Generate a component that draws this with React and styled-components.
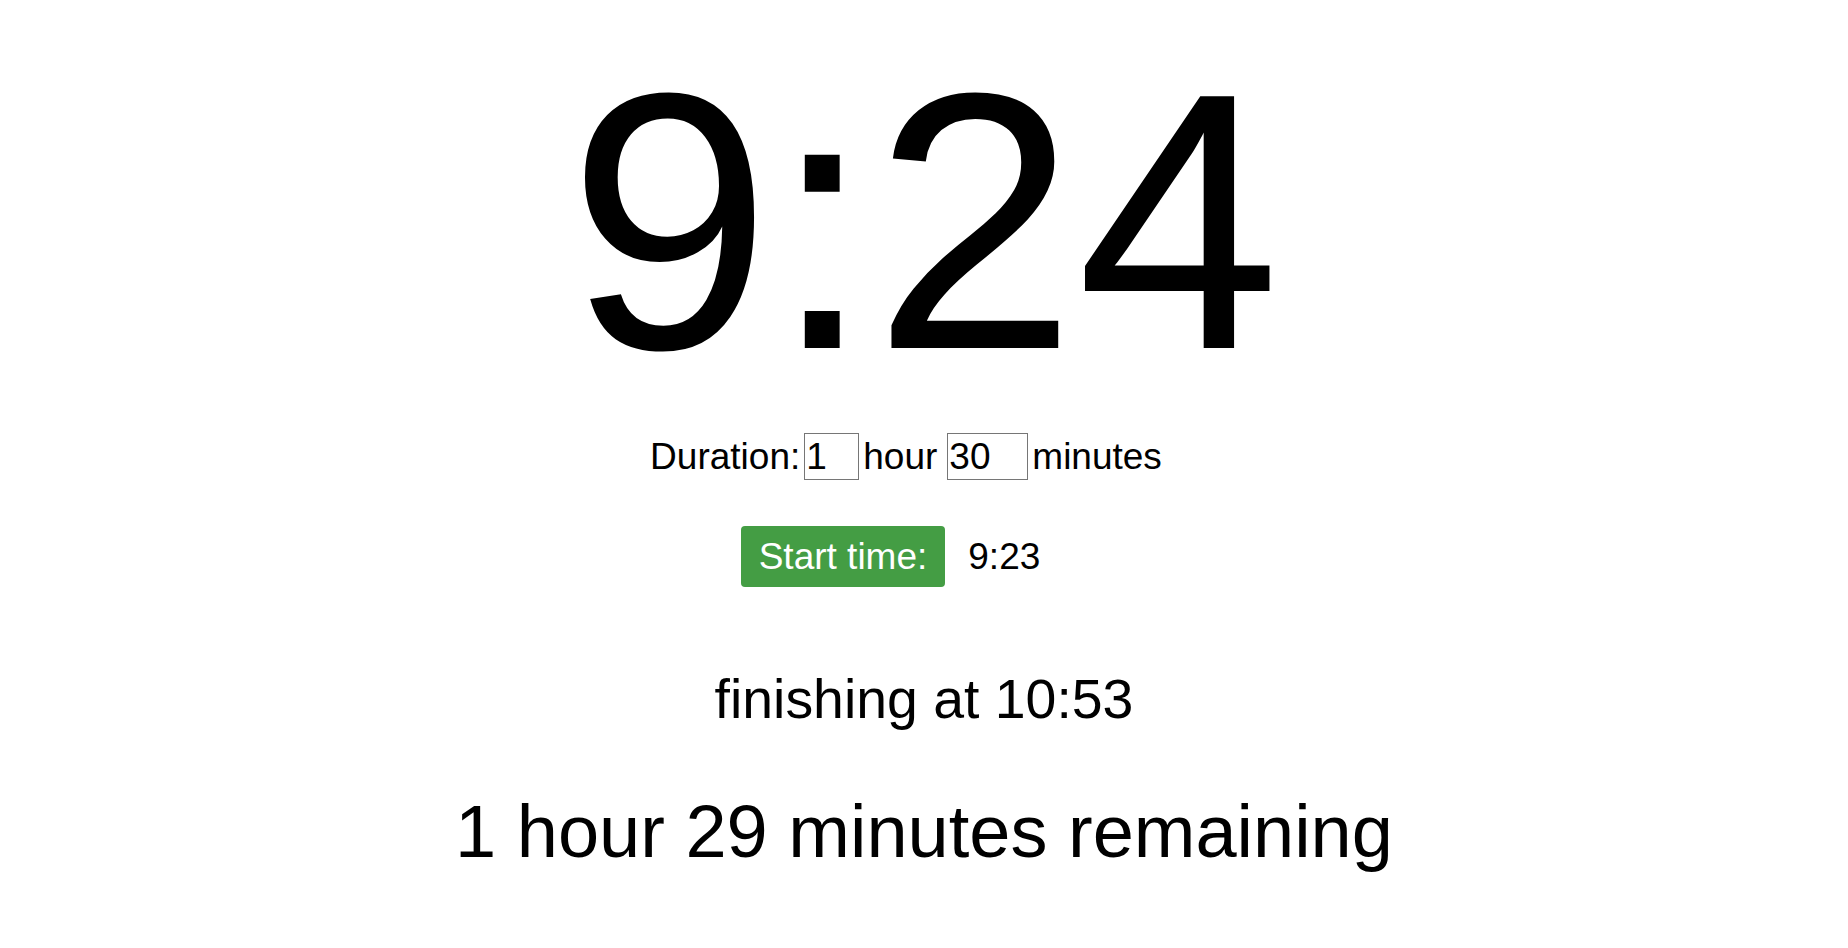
import React from 'react';
import styled, { createGlobalStyle } from 'styled-components';

const GlobalStyle = createGlobalStyle`
  html, body {
    margin: 0;
    padding: 0;
    background: #ffffff;
  }

  body {
    font-family: "Liberation Sans", Arial, sans-serif;
    color: #000000;
  }
`;

const Page = styled.main`
  display: flex;
  flex-direction: column;
  align-items: center;
  padding-top: 39px;
`;

const Clock = styled.div`
  font-size: 366px;
  line-height: 366px;
  white-space: nowrap;
`;

const DurationRow = styled.div`
  display: flex;
  align-items: center;
  gap: 4px;
  margin-top: 28px;
  padding-right: 36px;
  font-size: 37px;
  line-height: 47px;
`;

const Unit = styled.span`
  margin-right: ${(props) => (props.spaced ? '6px' : '0')};
`;

const NumberInput = styled.input`
  box-sizing: border-box;
  width: ${(props) => props.width};
  height: 47px;
  margin: 0;
  padding: 0 1px;
  border: 1px solid #767676;
  border-radius: 0;
  font-family: "Liberation Sans", Arial, sans-serif;
  font-size: 37px;
  color: #000000;
  background: #ffffff;
`;

const StartRow = styled.div`
  display: flex;
  align-items: center;
  margin-top: 46px;
  font-size: 37px;
`;

const StartButton = styled.button`
  padding: 6px 18px;
  border: none;
  border-radius: 4px;
  background: #449d44;
  color: #ffffff;
  font-family: "Liberation Sans", Arial, sans-serif;
  font-size: 37px;
  line-height: 49px;
  cursor: pointer;
`;

const TimeValue = styled.span`
  width: 139px;
  margin-left: 23px;
  line-height: 49px;
`;

const Finishing = styled.div`
  margin-top: 80px;
  font-size: 55.4px;
  line-height: 64px;
`;

const Remaining = styled.div`
  margin-top: 58px;
  font-size: 74px;
  line-height: 85px;
  white-space: nowrap;
`;

const App = () => {
  return (
    <>
      <GlobalStyle />
      <Page>
        <Clock>9:24</Clock>
        <DurationRow>
          <span>Duration:</span>
          <NumberInput type="text" width="55px" defaultValue="1" />
          <Unit spaced>hour</Unit>
          <NumberInput type="text" width="81px" defaultValue="30" />
          <Unit>minutes</Unit>
        </DurationRow>
        <StartRow>
          <StartButton type="button">Start time:</StartButton>
          <TimeValue>9:23</TimeValue>
        </StartRow>
        <Finishing>finishing at 10:53</Finishing>
        <Remaining>1 hour 29 minutes remaining</Remaining>
      </Page>
    </>
  );
};

export default App;
